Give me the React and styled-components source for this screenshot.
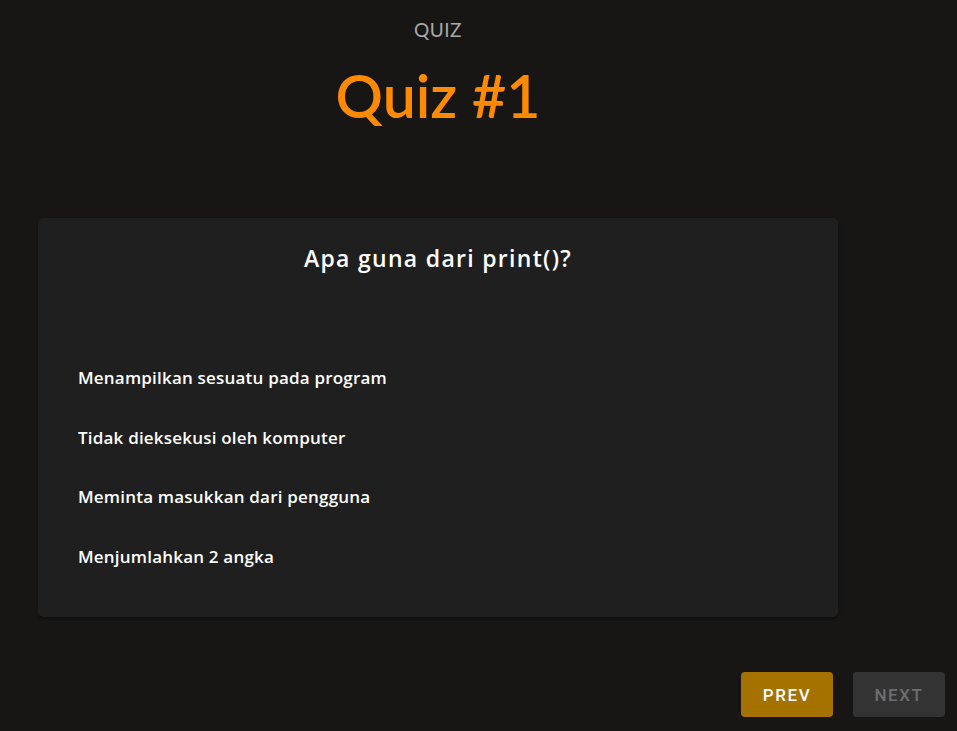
import React, { useState } from "react";
import styled, { createGlobalStyle } from "styled-components";

const GlobalStyle = createGlobalStyle`
  html, body {
    margin: 0;
    background: #171615;
    font-family: "Lato", "Noto Sans", sans-serif;
  }
`;

const options = [
  "Menampilkan sesuatu pada program",
  "Tidak dieksekusi oleh komputer",
  "Meminta masukkan dari pengguna",
  "Menjumlahkan 2 angka",
];

const App = () => {
  const [selected, setSelected] = useState(null);

  return (
    <>
      <GlobalStyle />
      <Page>
        <Main>
          <Header>
            <Label>QUIZ</Label>
            <Title>Quiz #1</Title>
          </Header>
          <Card>
            <Question>Apa guna dari print()?</Question>
            <OptionList>
              {options.map((opt, i) => (
                <Option
                  key={opt}
                  $active={selected === i}
                  onClick={() => setSelected(i)}
                >
                  {opt}
                </Option>
              ))}
            </OptionList>
          </Card>
        </Main>
        <Footer>
          <NavBtn $variant="primary">Prev</NavBtn>
          <NavBtn disabled>Next</NavBtn>
        </Footer>
      </Page>
    </>
  );
};

export default App;

const Page = styled.div`
  min-height: 731px;
  display: flex;
  flex-direction: column;
  box-sizing: border-box;
  padding: 0 12px 14px 38px;
`;

const Main = styled.div`
  width: 800px;
  display: flex;
  flex-direction: column;
  flex: 1;
`;

const Header = styled.div`
  display: flex;
  flex-direction: column;
  align-items: center;
  padding-top: 18px;
  height: 200px;
  box-sizing: border-box;
`;

const Label = styled.div`
  color: #a9a9a9;
  font-size: 19px;
  line-height: 24px;
  letter-spacing: 0.5px;
`;

const Title = styled.h1`
  margin: 18px 0 0;
  color: #ff8a00;
  font-size: 59px;
  line-height: 72px;
  font-weight: 600;
`;

const Card = styled.div`
  background: #1f1f1f;
  border-radius: 5px;
  box-shadow: 0 2px 3px rgba(0, 0, 0, 0.35);
  height: 399px;
  box-sizing: border-box;
  padding: 26px 40px 0;
  margin-top: 18px;
`;

const Question = styled.h2`
  margin: 0;
  text-align: center;
  color: #ffffff;
  font-family: "Open Sans", sans-serif;
  font-size: 23px;
  line-height: 28px;
  font-weight: 600;
  letter-spacing: 1.3px;
`;

const OptionList = styled.ul`
  list-style: none;
  margin: 96px 0 0;
  padding: 0;
  display: flex;
  flex-direction: column;
  gap: 39.7px;
`;

const Option = styled.li`
  color: ${(p) => (p.$active ? "#ff8a00" : "#ffffff")};
  font-family: "Open Sans", sans-serif;
  font-size: 17px;
  line-height: 20px;
  font-weight: 600;
  letter-spacing: 0.2px;
  cursor: pointer;
`;

const Footer = styled.div`
  display: flex;
  justify-content: flex-end;
  gap: 20px;
`;

const NavBtn = styled.button`
  width: 92px;
  height: 45px;
  border: none;
  border-radius: 4px;
  font-family: "Roboto", sans-serif;
  font-size: 17px;
  font-weight: 500;
  letter-spacing: 1.6px;
  text-transform: uppercase;
  background: ${(p) => (p.$variant === "primary" ? "#a57200" : "#333333")};
  color: ${(p) => (p.$variant === "primary" ? "#ffffff" : "#6e6e6e")};
  cursor: ${(p) => (p.disabled ? "default" : "pointer")};
`;
